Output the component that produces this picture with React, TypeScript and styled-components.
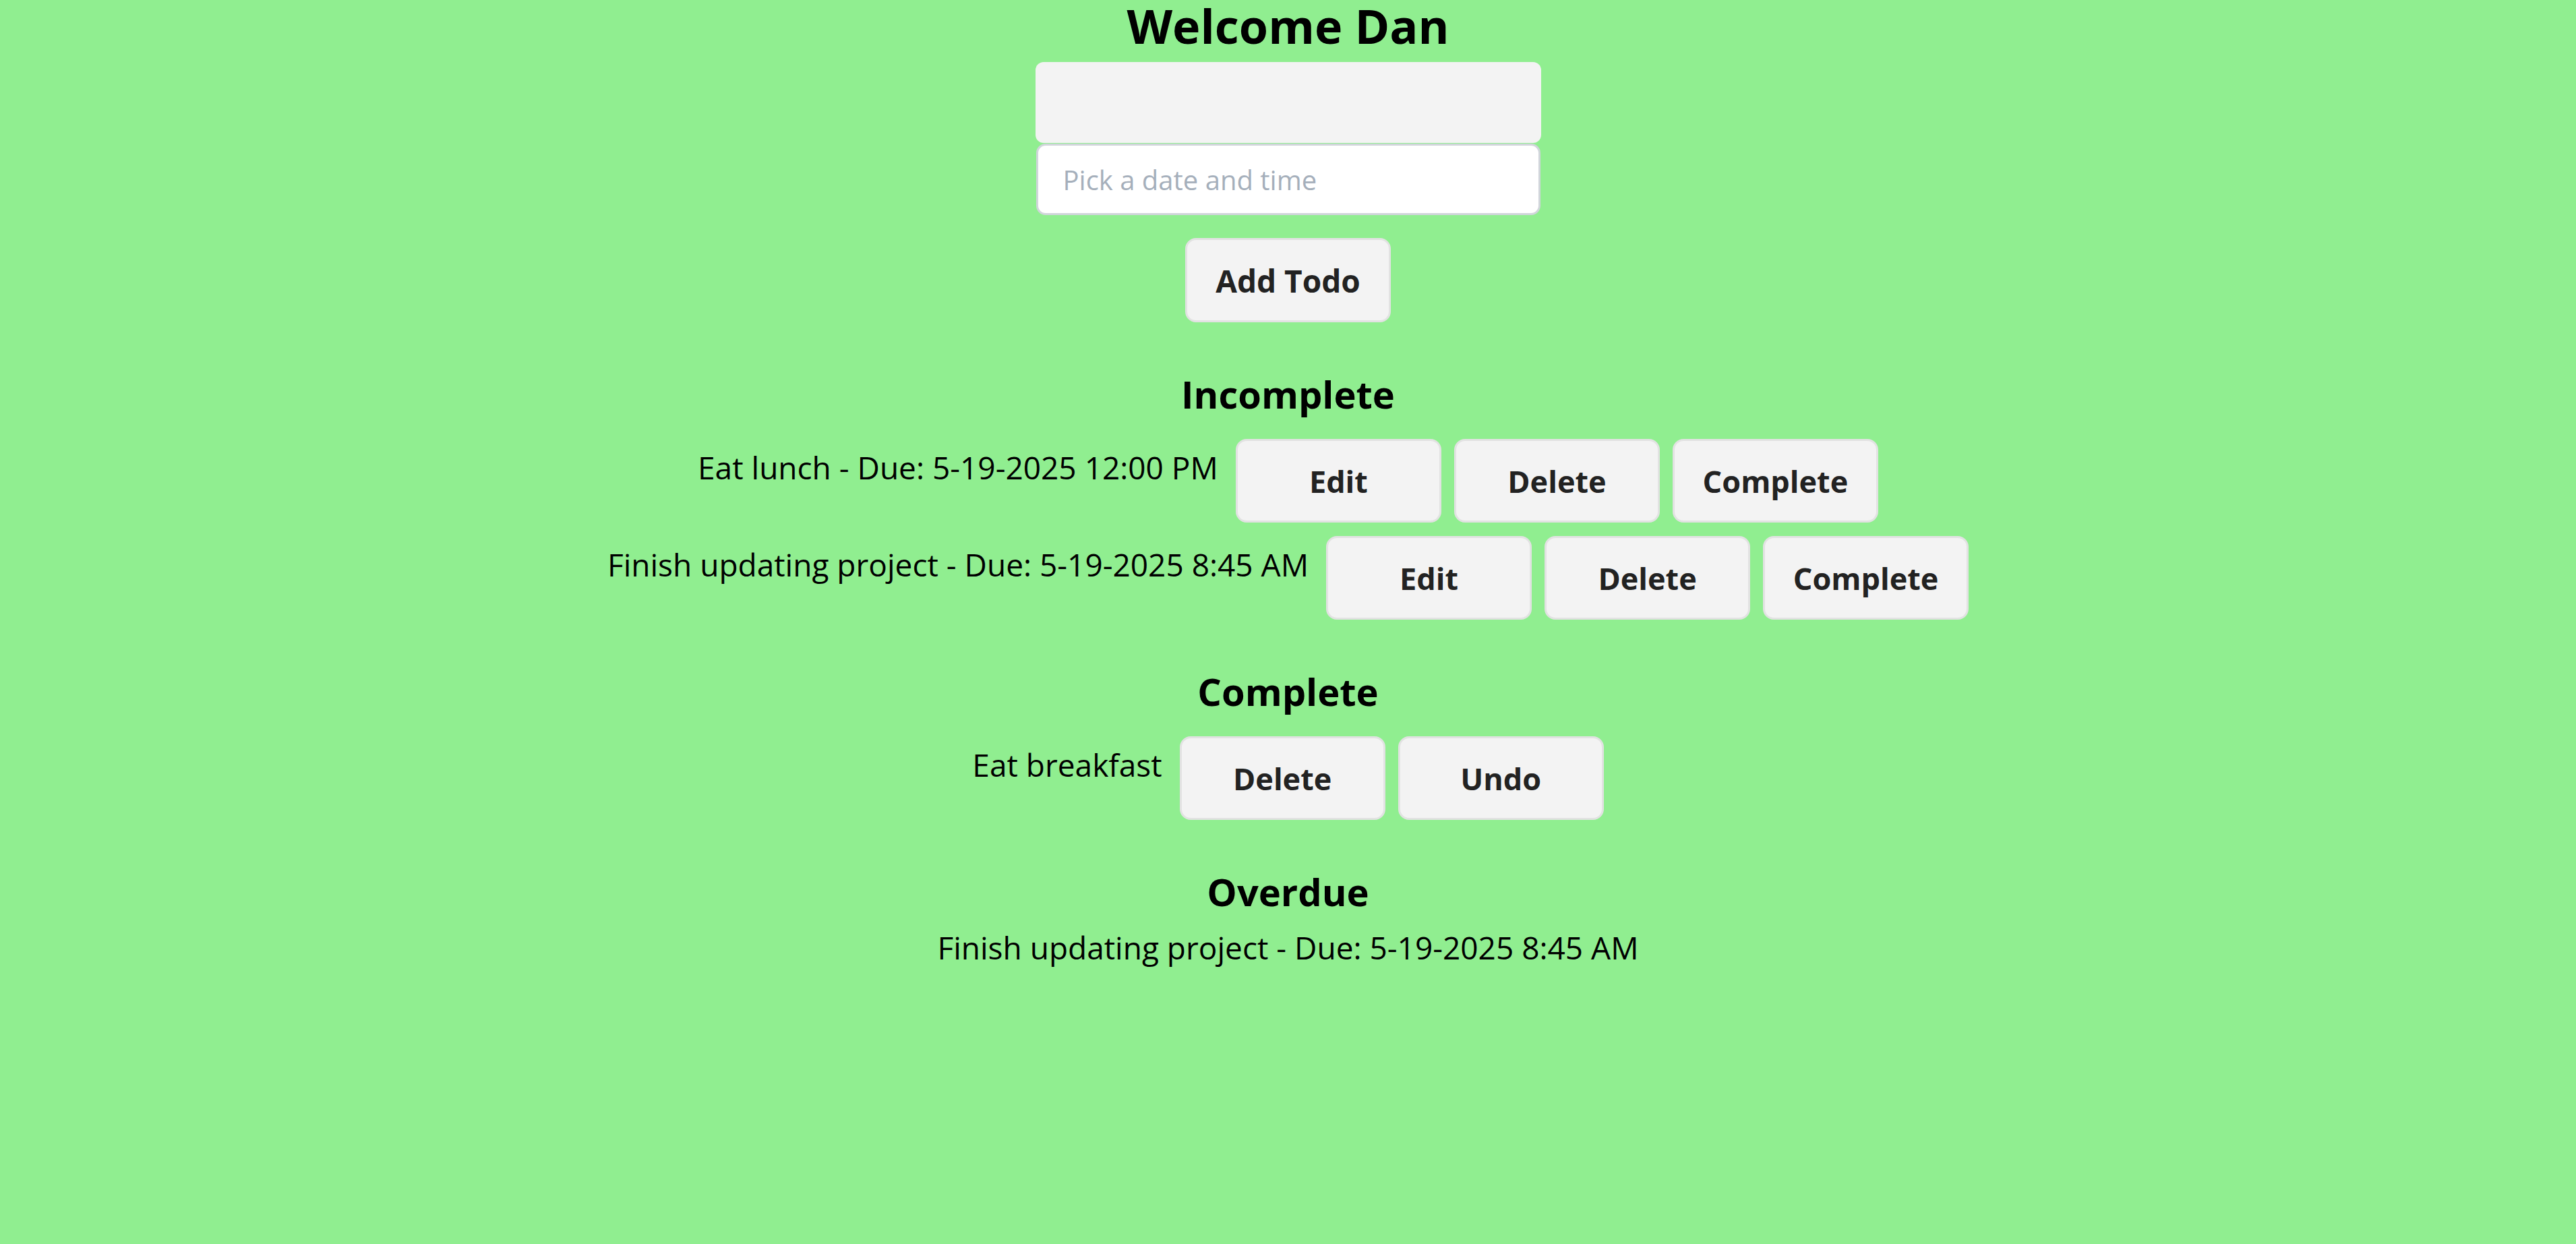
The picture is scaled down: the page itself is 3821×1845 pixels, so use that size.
import React from 'react';
import styled, {createGlobalStyle} from 'styled-components';

type Todo = {
  id: number;
  title: string;
  due?: string;
};

const incomplete: Todo[] = [
  {id: 1, title: 'Eat lunch', due: '5-19-2025 12:00 PM'},
  {id: 2, title: 'Finish updating project', due: '5-19-2025 8:45 AM'},
];

const complete: Todo[] = [{id: 3, title: 'Eat breakfast'}];

const overdue: Todo[] = [
  {id: 2, title: 'Finish updating project', due: '5-19-2025 8:45 AM'},
];

const label = ({title, due}: Todo) => (due ? `${title} - Due: ${due}` : title);

const App = () => {
  return (
    <>
      <GlobalStyle />
      <Page>
        <Title>Welcome Dan</Title>
        <Form onSubmit={e => e.preventDefault()}>
          <TextField type="text" />
          <DateField type="text" placeholder="Pick a date and time" />
          <AddButton type="submit">Add Todo</AddButton>
        </Form>

        <Section>
          <SectionTitle>Incomplete</SectionTitle>
          <List $offset={31}>
            {incomplete.map(todo => (
              <Row key={`incomplete-${todo.id}`}>
                <ItemText>{label(todo)}</ItemText>
                <ActionButton>Edit</ActionButton>
                <ActionButton>Delete</ActionButton>
                <ActionButton>Complete</ActionButton>
              </Row>
            ))}
          </List>
        </Section>

        <Section>
          <SectionTitle>Complete</SectionTitle>
          <List $offset={31}>
            {complete.map(todo => (
              <Row key={`complete-${todo.id}`}>
                <ItemText>{label(todo)}</ItemText>
                <ActionButton>Delete</ActionButton>
                <ActionButton>Undo</ActionButton>
              </Row>
            ))}
          </List>
        </Section>

        <Section>
          <SectionTitle>Overdue</SectionTitle>
          <List $offset={5}>
            {overdue.map(todo => (
              <Row key={`overdue-${todo.id}`}>
                <ItemText>{label(todo)}</ItemText>
              </Row>
            ))}
          </List>
        </Section>
      </Page>
    </>
  );
};

export default App;

const GlobalStyle = createGlobalStyle`
  html, body {
    margin: 0;
    padding: 0;
    background: #90ee90;
  }
  body {
    font-family: "Open Sans", "Noto Sans", sans-serif;
    color: #000;
    min-height: 100vh;
  }
`;

const Page = styled.main`
  display: flex;
  flex-direction: column;
  align-items: center;
`;

const Title = styled.h1`
  margin: 0;
  font-size: 70px;
  font-weight: 700;
  line-height: 76px;
`;

const Form = styled.form`
  display: flex;
  flex-direction: column;
  align-items: center;
  margin-top: 16px;
`;

const TextField = styled.input`
  box-sizing: border-box;
  width: 750px;
  height: 120px;
  padding: 0 37px;
  border: none;
  border-radius: 12px;
  background: #f3f3f3;
  font-family: inherit;
  font-size: 40px;
  outline: none;
`;

const DateField = styled.input`
  box-sizing: border-box;
  width: 748px;
  height: 106px;
  margin-top: 1px;
  padding: 0 37px;
  border: 3px solid #d1d5db;
  border-radius: 14px;
  background: #fff;
  font-family: inherit;
  font-size: 40px;
  outline: none;

  &::placeholder {
    color: #a5afbb;
  }
`;

const ActionButton = styled.button`
  box-sizing: border-box;
  width: 305px;
  height: 124px;
  padding: 0;
  border: 3px solid #e2e2e2;
  border-radius: 16px;
  background: #f3f3f3;
  color: #222;
  font-family: inherit;
  font-size: 45px;
  font-weight: 700;
  cursor: pointer;
`;

const AddButton = styled(ActionButton)`
  height: 125px;
  margin-top: 34px;
  font-size: 46px;
`;

const Section = styled.section`
  display: flex;
  flex-direction: column;
  align-items: center;
  margin-top: 70px;
`;

const SectionTitle = styled.h2`
  margin: 0;
  font-size: 56px;
  font-weight: 700;
  line-height: 72px;
`;

const List = styled.ul<{$offset: number}>`
  display: flex;
  flex-direction: column;
  align-items: center;
  gap: 20px;
  margin: ${({$offset}) => $offset}px 0 0;
  padding: 0;
  list-style: none;
`;

const Row = styled.li`
  display: flex;
  align-items: flex-start;
  gap: 19px;
`;

const ItemText = styled.span`
  margin-top: 10px;
  font-size: 46px;
  line-height: 64px;
  white-space: nowrap;

  &:not(:last-child) {
    margin-right: 7px;
  }
`;
